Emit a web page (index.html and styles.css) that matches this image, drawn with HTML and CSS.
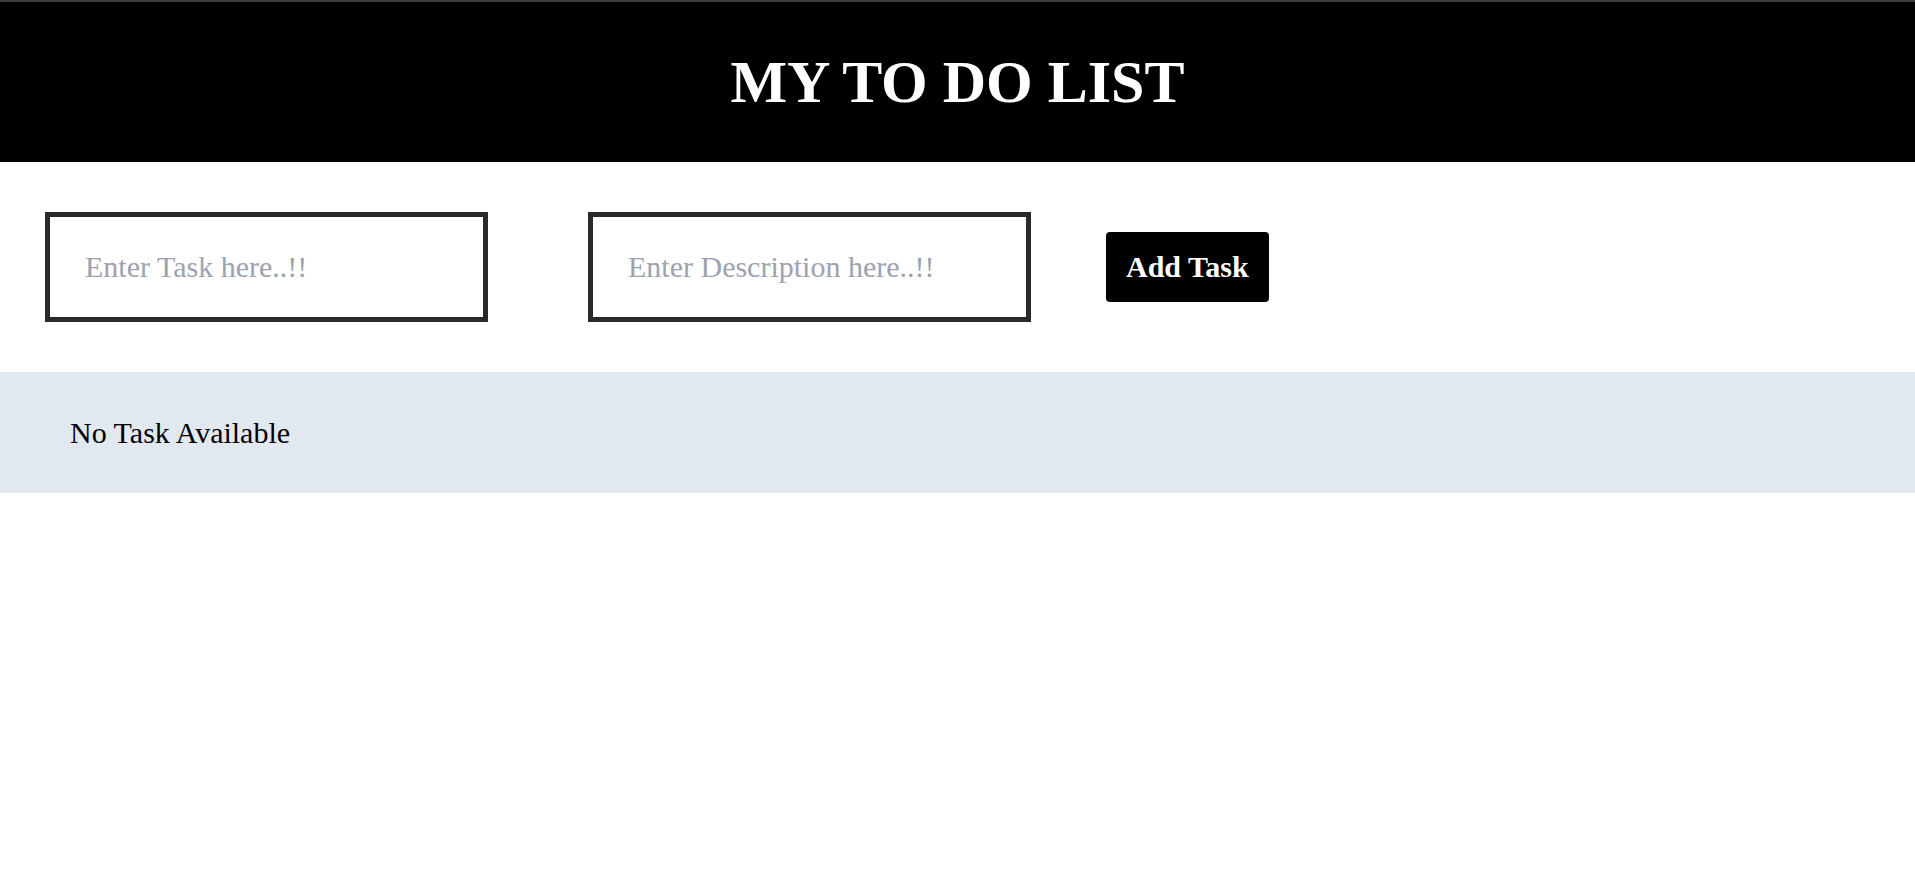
FILE: index.html
```html
<!DOCTYPE html>
<html lang="en">
<head>
<meta charset="utf-8">
<title>My To Do List</title>
<link rel="stylesheet" href="styles.css">
</head>
<body>
  <header class="header">
    <h1 class="title">MY TO DO LIST</h1>
  </header>
  <form class="entry">
    <input class="field" type="text" placeholder="Enter Task here..!!">
    <input class="field field-desc" type="text" placeholder="Enter Description here..!!">
    <button class="add-btn" type="button">Add Task</button>
  </form>
  <section class="tasks">
    <p class="empty">No Task Available</p>
  </section>
</body>
</html>
```

FILE: styles.css
```css
* {
  box-sizing: border-box;
}

html, body {
  margin: 0;
  padding: 0;
  background: #ffffff;
  font-family: "Liberation Serif", "Times New Roman", serif;
}

.header {
  background: #000000;
  border-top: 2px solid #3d3d3d;
  padding: 50px 0;
  text-align: center;
}

.title {
  margin: 0;
  color: #ffffff;
  font-size: 60px;
  line-height: 60px;
  font-weight: 700;
}

.entry {
  display: flex;
  align-items: center;
  padding: 50px 45px;
  margin: 0;
}

.field {
  width: 443px;
  height: 110px;
  border: 5px solid #29292a;
  border-radius: 0;
  padding: 0 35px;
  font-family: "Liberation Serif", "Times New Roman", serif;
  font-size: 30px;
  color: #111111;
  background: #ffffff;
  outline: none;
}

.field::placeholder {
  color: #9ca3af;
}

.field-desc {
  margin-left: 100px;
}

.add-btn {
  margin-left: 75px;
  background: #000000;
  color: #ffffff;
  border: none;
  border-radius: 4px;
  padding: 18px 20px;
  font-family: "Liberation Serif", "Times New Roman", serif;
  font-size: 30px;
  line-height: 34px;
  font-weight: 700;
  cursor: pointer;
}

.tasks {
  background: #e2e8f0;
  padding: 44px 70px;
}

.empty {
  margin: 0;
  font-size: 30px;
  line-height: 33px;
  color: #000000;
}
```
